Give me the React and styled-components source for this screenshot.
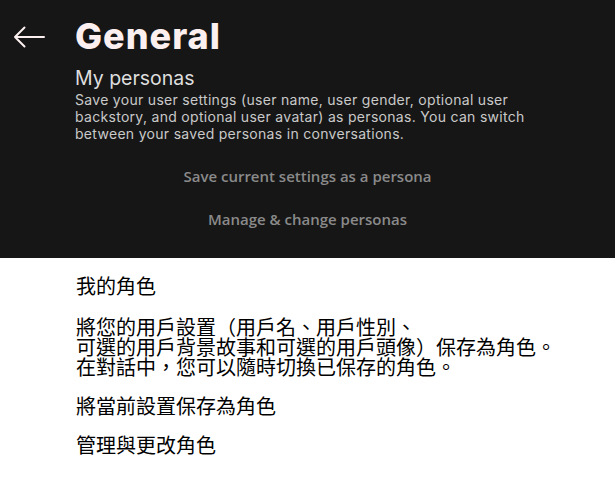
import React from 'react';
import styled, { createGlobalStyle } from 'styled-components';

const GlobalStyle = createGlobalStyle`
    html, body {
        margin: 0;
        padding: 0;
        background: #ffffff;
    }
`;

const Page = styled.div`
    width: 615px;
    min-height: 488px;
    background: #ffffff;
`;

const Header = styled.section`
    background: #161616;
    height: 258px;
    box-sizing: border-box;
    display: flex;
    padding-top: 16px;
`;

const BackButton = styled.button`
    width: 75px;
    flex: 0 0 75px;
    height: 42px;
    border: none;
    background: none;
    padding: 0 0 0 13px;
    display: flex;
    align-items: center;
    cursor: pointer;
`;

const HeaderBody = styled.div`
    flex: 1;
    display: flex;
    flex-direction: column;
    font-family: Inter, "Noto Sans", sans-serif;
`;

const Title = styled.h1`
    margin: 0;
    font-size: 36px;
    line-height: 40px;
    font-weight: 800;
    color: #fcefef;
    letter-spacing: 1px;
`;

const SectionTitle = styled.h2`
    margin: 11px 0 0;
    font-size: 19.5px;
    line-height: 22px;
    font-weight: 400;
    color: #dedede;
`;

const Description = styled.p`
    margin: 2px 0 0;
    max-width: 470px;
    font-size: 14px;
    line-height: 17px;
    letter-spacing: 0.3px;
    color: #c9c9c9;
`;

const Actions = styled.div`
    display: flex;
    flex-direction: column;
    align-items: center;
    gap: 22px;
    margin: 24px 0 0 -75px;
`;

const ActionButton = styled.button`
    border: none;
    background: none;
    padding: 0;
    font-family: "Open Sans", sans-serif;
    font-size: 15px;
    font-weight: 600;
    line-height: 21px;
    color: #8a8a8a;
    cursor: pointer;
`;

const Translation = styled.div`
    padding: 18px 0 0 76px;
    font-family: "Noto Sans CJK TC", sans-serif;
    font-size: 20px;
    line-height: 20px;
    color: #000000;
`;

const Para = styled.p`
    margin: 0 0 ${props => props.gap || 19}px;
`;

const ArrowIcon = () => (
    <svg width="32" height="22" viewBox="0 0 32 22" fill="none">
        <path d="M31 11H2M11.5 1.5L2 11l9.5 9.5" stroke="#fcefef" strokeWidth="2" strokeLinecap="round" strokeLinejoin="round" />
    </svg>
);

const App = () => (
    <Page>
        <GlobalStyle />
        <Header>
            <BackButton aria-label="Back">
                <ArrowIcon />
            </BackButton>
            <HeaderBody>
                <Title>General</Title>
                <SectionTitle>My personas</SectionTitle>
                <Description>
                    Save your user settings (user name, user gender, optional user backstory, and optional user avatar) as personas. You can switch between your saved personas in conversations.
                </Description>
                <Actions>
                    <ActionButton>Save current settings as a persona</ActionButton>
                    <ActionButton>Manage &amp; change personas</ActionButton>
                </Actions>
            </HeaderBody>
        </Header>
        <Translation>
            <Para gap={21}>我的角色</Para>
            <Para>
                將您的用戶設置（用戶名、用戶性別、<br />
                可選的用戶背景故事和可選的用戶頭像）保存為角色。<br />
                在對話中，您可以隨時切換已保存的角色。
            </Para>
            <Para>將當前設置保存為角色</Para>
            <Para>管理與更改角色</Para>
        </Translation>
    </Page>
);

export default App;
